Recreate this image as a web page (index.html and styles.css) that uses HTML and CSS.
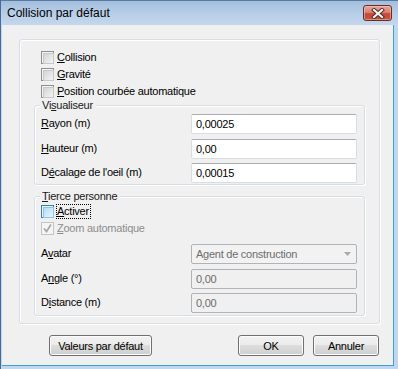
FILE: index.html
```html
<!DOCTYPE html>
<html>
<head>
<meta charset="utf-8">
<link rel="stylesheet" href="styles.css">
</head>
<body>
<div class="window">
  <div class="titlebar">
    <span class="title">Collision par défaut</span>
    <div class="close">
      <svg width="14" height="11" viewBox="0 0 14 11">
        <path d="M3 2 L11 9 M11 2 L3 9" stroke="#4a2a26" stroke-width="4" stroke-linecap="square" fill="none"/>
        <path d="M3 2 L11 9 M11 2 L3 9" stroke="#f4f4f4" stroke-width="2.2" stroke-linecap="square" fill="none"/>
      </svg>
    </div>
  </div>
  <div class="client">
    <div class="panel">
      <div class="checks">
        <div class="chk"><span class="box"></span><span class="lbl"><u>C</u>ollision</span></div>
        <div class="chk"><span class="box"></span><span class="lbl"><u>G</u>ravité</span></div>
        <div class="chk"><span class="box"></span><span class="lbl"><u>P</u>osition courbée automatique</span></div>
      </div>
      <div class="group g-vis">
        <span class="legend">Vi<u>s</u>ualiseur</span>
        <div class="rows">
          <div class="row"><span class="rlabel"><u>R</u>ayon (m)</span><div class="field">0,00025</div></div>
          <div class="row"><span class="rlabel"><u>H</u>auteur (m)</span><div class="field">0,00</div></div>
          <div class="row"><span class="rlabel">D<u>é</u>calage de l'oeil (m)</span><div class="field">0,00015</div></div>
        </div>
      </div>
      <div class="group g-tp">
        <span class="legend"><u>T</u>ierce personne</span>
        <div class="checks tp-checks">
          <div class="chk hot"><span class="box"></span><span class="lbl focus"><u>A</u>ctiver</span></div>
          <div class="chk disabled"><span class="box">
            <svg width="11" height="11" viewBox="0 0 11 11"><path d="M2 5.5 L4.5 8.5 L9 1.5" stroke="#a8a8a8" stroke-width="1.8" fill="none"/></svg>
          </span><span class="lbl"><u>Z</u>oom automatique</span></div>
        </div>
        <div class="rows tp-rows">
          <div class="row"><span class="rlabel">A<u>v</u>atar</span>
            <div class="field combo off"><span>Agent de construction</span>
              <svg width="7" height="4" viewBox="0 0 7 4"><path d="M0 0 H7 L3.5 4 Z" fill="#a9a9a9"/></svg>
            </div>
          </div>
          <div class="row"><span class="rlabel">A<u>n</u>gle (°)</span><div class="field off">0,00</div></div>
          <div class="row"><span class="rlabel">D<u>i</u>stance (m)</span><div class="field off">0,00</div></div>
        </div>
      </div>
    </div>
    <div class="buttons">
      <button class="btn btn-def">Valeurs par défaut</button>
      <span class="spacer"></span>
      <button class="btn">OK</button>
      <button class="btn">Annuler</button>
    </div>
  </div>
</div>
</body>
</html>
```

FILE: styles.css
```css
* { box-sizing: border-box; }
html, body { margin: 0; padding: 0; }
body {
  width: 398px; height: 369px; overflow: hidden;
  font-family: "Liberation Sans", Arial, sans-serif;
  font-size: 11px; letter-spacing: -0.25px; color: #000;
  background: #fff;
}
u { text-decoration: underline; text-underline-offset: 1px; }

.window {
  width: 398px; height: 369px;
  display: flex; flex-direction: column;
  background: #c2d6ec;
  border-left: 1px solid #4a6a90;
}
.titlebar {
  height: 25px; flex: none;
  display: flex; align-items: flex-start;
  background: linear-gradient(#a3bedd, #b9cfe8 55%, #c3d7ed);
  border-top: 1px solid #5a7ba2;
}
.title {
  font-size: 12px; letter-spacing: 0; color: #000;
  padding: 5px 0 0 6px; line-height: 15px;
}
.close {
  margin: 4px 6px 0 auto;
  width: 29px; height: 16px;
  border: 1px solid #6b2a24; border-radius: 3px;
  background: linear-gradient(#e5a597, #d98474 45%, #c8473a 55%, #c4553f);
  box-shadow: inset 0 0 0 1px rgba(255,220,210,0.45);
  display: flex; align-items: center; justify-content: center;
}

.client {
  flex: 1;
  margin: 0 4px 3px 1px;
  background: #f0f0f0;
  border-right: 1px solid #3aa0e8;
  border-bottom: 1px solid #3aa0e8;
  padding: 14px 13px 0 17px;
  display: flex; flex-direction: column;
}

.panel {
  width: 361px; height: 285px;
  border: 1px solid #d5dfe5; border-radius: 3px;
  box-shadow: inset 1px 1px 0 #fff, 1px 1px 0 #fff;
  padding: 9px 14px 0 14px;
  display: flex; flex-direction: column;
}

.checks { margin-left: 7px; display: flex; flex-direction: column; }
.chk { height: 17px; display: flex; align-items: center; }
.box {
  width: 13px; height: 13px; flex: none; margin-right: 2px;
  border: 1px solid #8e8f8f;
  background: #f4f4f4;
  position: relative;
  display: flex; align-items: center; justify-content: center;
}
.box::after {
  content: ""; position: absolute; left: 1px; top: 1px; width: 9px; height: 9px;
  border: 1px solid #c6c8cb;
  background: linear-gradient(135deg, #d3d5d8, #f3f3f3);
}
.lbl { border: 1px dotted transparent; line-height: 13px; padding: 0 1px 0 0; }
.lbl.focus { border-color: #000; }
.chk.hot .box { border-color: #3c7fb1; background: #e8f4fc; }
.chk.hot .box::after { border-color: #8ec5ec; background: linear-gradient(135deg, #b6dcf7, #e9f5fd); }
.chk.disabled .box { border-color: #c4c4c4; background: #f4f4f4; }
.chk.disabled .box::after { display: none; }
.chk.disabled .lbl { color: #8d8d8d; }

.group {
  position: relative;
  border: 1px solid #d5dfe5; border-radius: 3px;
  box-shadow: inset 1px 1px 0 #fff, 1px 1px 0 #fff;
}
.legend {
  position: absolute; top: -8px; left: 5px;
  background: #f0f0f0; padding: 0 3px 0 2px;
  line-height: 14px; color: #1a1a1a;
}
.g-vis { margin-top: 5px; height: 80px; padding: 8px 7px 0 6px; }
.g-tp { margin-top: 11px; height: 120px; padding: 6px 7px 0 6px; }
.tp-checks { margin-left: 0; }
.tp-rows { margin-top: 7px; }

.rows { display: flex; flex-direction: column; gap: 4.5px; }
.row { display: flex; align-items: flex-start; height: 20px; }
.rlabel { width: 150px; flex: none; line-height: 14px; padding-top: 2px; }
.field {
  width: 166px; height: 20px;
  border: 1px solid #d9dde4; border-top-color: #abadb3; border-radius: 2px;
  background: #fff;
  padding: 0 4px; line-height: 18px;
}
.field.off { background: #f0f0f0; border-color: #b0b4b8; color: #6d6d6d; }
.field.combo { display: flex; align-items: center; justify-content: space-between; padding-right: 5px; background: #f2f2f2; }

.buttons { margin-top: 11px; display: flex; padding-left: 30px; width: 361px; padding-right: 1px; }
.spacer { flex: 1; }
.btn {
  font: inherit; letter-spacing: inherit; color: #000;
  height: 21px; width: 66px; padding: 0; margin: 0;
  border: 1px solid #707070; border-radius: 3px;
  background: linear-gradient(#f2f2f2, #ebebeb 50%, #dddddd 50%, #cfcfcf);
  box-shadow: inset 0 0 0 1px #fcfcfc;
}
.btn + .btn { margin-left: 9px; }
.btn-def { width: 103px; }
```
